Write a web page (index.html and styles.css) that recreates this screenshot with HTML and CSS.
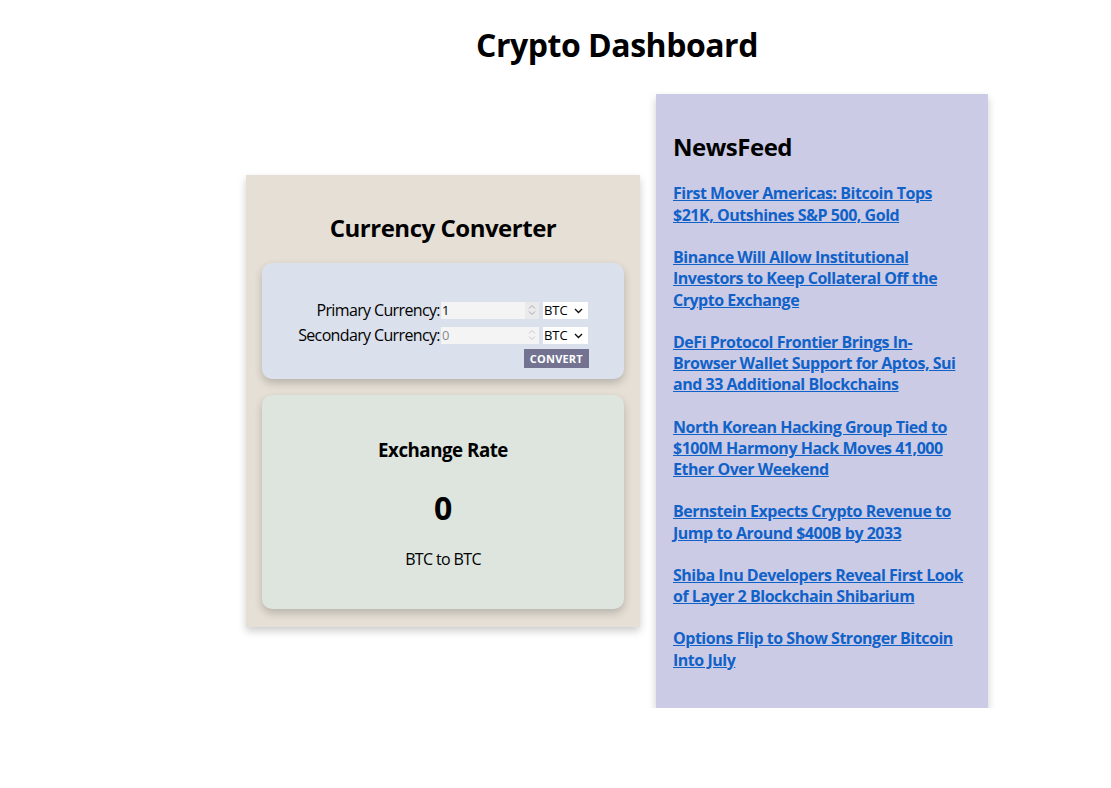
FILE: index.html
```html
<!DOCTYPE html>
<html lang="en">
<head>
<meta charset="utf-8">
<title>Crypto Dashboard</title>
<link rel="stylesheet" href="styles.css">
</head>
<body>
<div class="app">
  <h1 class="title">Crypto Dashboard</h1>
  <div class="row">
    <div class="converter">
      <h2 class="conv-title">Currency Converter</h2>
      <div class="input-box">
        <div class="form">
          <label class="lbl" for="primary">Primary Currency:</label>
          <div class="ctrl">
            <span class="num-wrap">
              <input id="primary" class="num" type="number" value="1">
              <span class="spin spin-active"><svg width="10" height="14" viewBox="0 0 10 14"><path d="M2 5.5 L5 2.5 L8 5.5 M2 8.5 L5 11.5 L8 8.5" fill="none" stroke="#a9a9ad" stroke-width="1"/></svg></span>
            </span>
            <span class="sel-wrap">
              <select class="sel"><option>BTC</option><option>ETH</option><option>USD</option></select>
              <svg class="chev" width="9" height="6" viewBox="0 0 9 6"><path d="M1 1 L4.5 4.5 L8 1" fill="none" stroke="#111" stroke-width="1.4"/></svg>
            </span>
          </div>
          <label class="lbl" for="secondary">Secondary Currency:</label>
          <div class="ctrl">
            <span class="num-wrap">
              <input id="secondary" class="num num-out" type="number" value="0" disabled>
              <span class="spin"><svg width="10" height="14" viewBox="0 0 10 14"><path d="M2 5.5 L5 2.5 L8 5.5 M2 8.5 L5 11.5 L8 8.5" fill="none" stroke="#c9c9cc" stroke-width="1"/></svg></span>
            </span>
            <span class="sel-wrap">
              <select class="sel"><option>BTC</option><option>ETH</option><option>USD</option></select>
              <svg class="chev" width="9" height="6" viewBox="0 0 9 6"><path d="M1 1 L4.5 4.5 L8 1" fill="none" stroke="#111" stroke-width="1.4"/></svg>
            </span>
          </div>
          <div class="spacer"></div>
          <div class="btn-cell"><button class="convert" type="button">Convert</button></div>
        </div>
      </div>
      <div class="rate-box">
        <h3 class="rate-title">Exchange Rate</h3>
        <div class="rate-value">0</div>
        <p class="rate-pair">BTC to BTC</p>
      </div>
    </div>
    <div class="news">
      <h2 class="news-title">NewsFeed</h2>
      <a class="news-item" href="#">First Mover Americas: Bitcoin Tops $21K, Outshines S&amp;P 500, Gold</a>
      <a class="news-item" href="#">Binance Will Allow Institutional Investors to Keep Collateral Off the Crypto Exchange</a>
      <a class="news-item" href="#">DeFi Protocol Frontier Brings In-Browser Wallet Support for Aptos, Sui and 33 Additional Blockchains</a>
      <a class="news-item" href="#">North Korean Hacking Group Tied to $100M Harmony Hack Moves 41,000 Ether Over Weekend</a>
      <a class="news-item" href="#">Bernstein Expects Crypto Revenue to Jump to Around $400B by 2033</a>
      <a class="news-item" href="#">Shiba Inu Developers Reveal First Look of Layer 2 Blockchain Shibarium</a>
      <a class="news-item" href="#">Options Flip to Show Stronger Bitcoin Into July</a>
    </div>
  </div>
</div>
</body>
</html>
```

FILE: styles.css
```css
body {
  margin: 0;
  font-family: "Open Sans", "Noto Sans", sans-serif;
  line-height: 1.33;
  letter-spacing: -0.03em;
  color: #000;
  background: #fff;
}

.app {
  width: 742px;
  margin-left: 246px;
}

.title {
  font-size: 32px;
  font-weight: 700;
  text-align: center;
  margin: 24px 0 27px;
}

.row {
  display: flex;
  align-items: center;
  gap: 16px;
}

.converter {
  width: 394px;
  box-sizing: border-box;
  padding: 16px 16px 18px;
  background: #e5dfd5;
  box-shadow: 0 4px 8px rgba(0, 0, 0, 0.2);
}

.conv-title {
  font-size: 24px;
  font-weight: 700;
  text-align: center;
  margin: 21px 0 19px;
}

.input-box {
  background: #dbe1ec;
  border-radius: 10px;
  padding: 37px 0 11px;
  margin-bottom: 16px;
  box-shadow: 0 4px 8px rgba(0, 0, 0, 0.2);
}

.form {
  display: grid;
  grid-template-columns: auto auto;
  justify-content: center;
  align-items: center;
  column-gap: 1px;
  row-gap: 4px;
}

.lbl {
  font-size: 16px;
  letter-spacing: -0.04em;
  text-align: right;
}

.ctrl {
  display: flex;
  align-items: center;
  gap: 4px;
}

.num-wrap {
  display: flex;
  width: 98px;
  height: 17px;
  background: #f4f4f4;
}

.num {
  width: 84px;
  height: 17px;
  box-sizing: border-box;
  border: none;
  padding: 0 0 0 1px;
  margin: 0;
  font-family: "Open Sans", "Noto Sans", sans-serif;
  font-size: 13px;
  letter-spacing: 0;
  background: transparent;
  color: #000;
  outline: none;
  -moz-appearance: textfield;
}

.num::-webkit-inner-spin-button,
.num::-webkit-outer-spin-button {
  -webkit-appearance: none;
  margin: 0;
}

.num-out {
  color: #8a8a8a;
}

.spin {
  width: 14px;
  height: 17px;
  display: flex;
  align-items: center;
  justify-content: center;
}

.spin-active {
  background: #eaeaed;
}

.sel-wrap {
  position: relative;
  display: flex;
  width: 45px;
  height: 17px;
}

.sel {
  -webkit-appearance: none;
  appearance: none;
  width: 45px;
  height: 17px;
  box-sizing: border-box;
  border: none;
  border-radius: 0;
  padding: 0 0 0 1px;
  margin: 0;
  font-family: "Open Sans", "Noto Sans", sans-serif;
  font-size: 13px;
  letter-spacing: 0;
  line-height: 17px;
  background: #fff;
  color: #000;
}

.chev {
  position: absolute;
  right: 5px;
  top: 6px;
  pointer-events: none;
}

.btn-cell {
  display: flex;
  justify-content: flex-end;
  margin-top: -1px;
  margin-right: -1px;
}

.convert {
  width: 65px;
  height: 19px;
  border: none;
  padding: 0;
  background: #737391;
  color: #fff;
  font-family: "Open Sans", "Noto Sans", sans-serif;
  font-size: 11px;
  font-weight: 700;
  letter-spacing: 0.2px;
  text-transform: uppercase;
}

.rate-box {
  background: #dde5de;
  border-radius: 10px;
  padding: 43px 0 39px;
  text-align: center;
  box-shadow: 0 4px 8px rgba(0, 0, 0, 0.2);
}

.rate-title {
  font-size: 18.72px;
  font-weight: 700;
  margin: 0 0 24px;
}

.rate-value {
  font-size: 32px;
  font-weight: 700;
  margin: 0 0 19px;
}

.rate-pair {
  font-size: 16px;
  letter-spacing: -0.04em;
  margin: 0;
}

.news {
  width: 332px;
  box-sizing: border-box;
  padding: 16px 15px 16px 17px;
  background: #cbcbe6;
  box-shadow: 0 4px 8px rgba(0, 0, 0, 0.2);
}

.news-title {
  font-size: 24px;
  font-weight: 700;
  margin: 21px 0 20px;
}

.news-item {
  display: block;
  margin: 21px 0;
  font-size: 16px;
  font-weight: 700;
  color: #1062c8;
  text-decoration: underline;
}
```
